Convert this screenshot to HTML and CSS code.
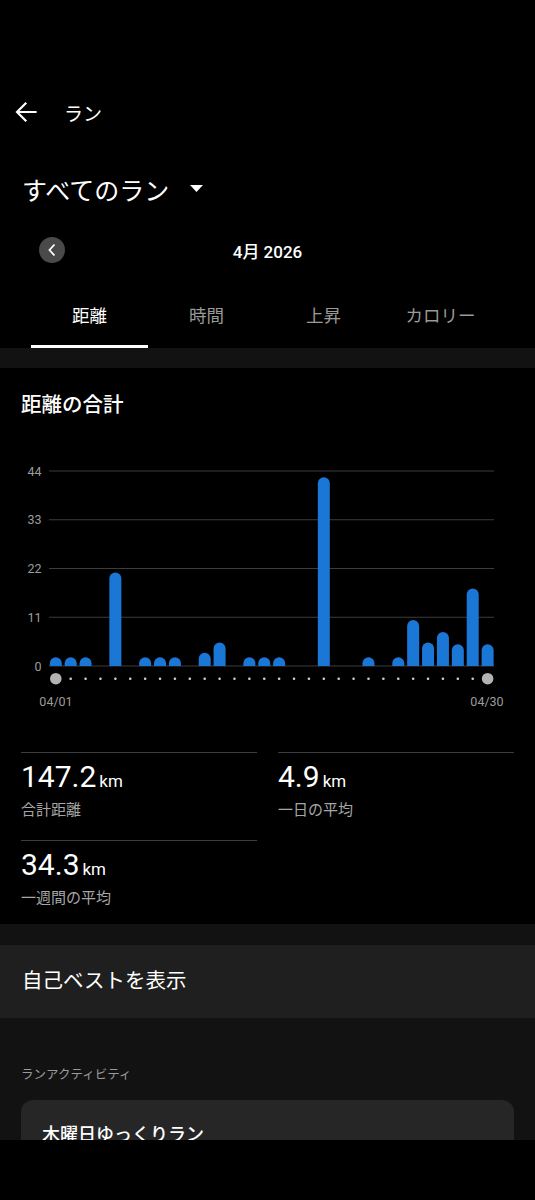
FILE: index.html
```html
<!DOCTYPE html>
<html lang="ja">
<head>
    <meta charset="UTF-8">
    <meta name="viewport" content="width=device-width, initial-scale=1.0">
    <title>ラン</title>
    <link rel="stylesheet" href="styles.css">
</head>
<body>
<div class="page">
    <div class="content">
        <div class="status"></div>

        <div class="topbar">
            <svg class="back" width="22" height="22" viewBox="0 0 22 22">
                <path d="M20.5 11H2.5M10.5 2.5L2 11l8.5 8.5" fill="none" stroke="#fff" stroke-width="2.2" stroke-linecap="square"/>
            </svg>
            <span class="topbar-title">ラン</span>
        </div>

        <div class="filter">
            <span>すべてのラン</span>
            <svg width="13" height="7" viewBox="0 0 13 7"><path d="M0 0h13L6.5 7z" fill="#fff"/></svg>
        </div>

        <div class="month">
            <div class="month-prev">
                <svg width="10" height="14" viewBox="0 0 10 14"><path d="M7.5 1.5L2.5 7l5 5.5" fill="none" stroke="#fff" stroke-width="1.8"/></svg>
            </div>
            <div class="month-label">4月 2026</div>
        </div>

        <div class="tabs">
            <div class="tab active">距離</div>
            <div class="tab">時間</div>
            <div class="tab">上昇</div>
            <div class="tab">カロリー</div>
        </div>

        <div class="band"></div>

        <div class="summary">
            <div class="summary-title">距離の合計</div>
            <svg class="chart" id="chart" width="535" height="265" viewBox="0 0 535 265"></svg>

            <div class="stats">
                <div class="stat">
                    <div class="stat-value">147.2<span class="unit">km</span></div>
                    <div class="stat-label">合計距離</div>
                </div>
                <div class="stat">
                    <div class="stat-value">4.9<span class="unit">km</span></div>
                    <div class="stat-label">一日の平均</div>
                </div>
                <div class="stat">
                    <div class="stat-value">34.3<span class="unit">km</span></div>
                    <div class="stat-label">一週間の平均</div>
                </div>
            </div>
        </div>

        <div class="band band-lower"></div>

        <div class="best">自己ベストを表示</div>

        <div class="activities">
            <div class="section-label">ランアクティビティ</div>
            <div class="activity">
                <div class="activity-name">木曜日ゆっくりラン</div>
                <div class="activity-dist">5.1 km</div>
            </div>
        </div>
    </div>
    <div class="navbar"></div>
</div>

<script>
    // 1日ごとの距離 (km)
    const days = [2, 2, 2, 0, 21.1, 0, 2, 2, 2, 0,
                  3, 5.3, 0, 2, 2, 2, 0, 0, 42.6, 0,
                  0, 2, 0, 2, 10.4, 5.3, 7.7, 4.9, 17.5, 4.9];
    const chart = document.getElementById("chart");
    const baseY = 216, topY = 21, maxKm = 44;
    const gridLeft = 49, gridRight = 494;
    const firstX = 55.8, step = 14.89, barW = 12;
    let html = "";

    // グリッドと目盛り
    [44, 33, 22, 11, 0].forEach((v, i) => {
        const y = topY + (baseY - topY) * i / 4;
        html += `<line x1="${gridLeft}" y1="${y}" x2="${gridRight}" y2="${y}" class="grid"/>`;
        html += `<text x="41.5" y="${y + 4.5}" class="axis" text-anchor="end">${v}</text>`;
    });

    // バーと日付のドット
    const scale = (baseY - topY) / maxKm;
    days.forEach((km, i) => {
        const cx = firstX + i * step;
        if (km > 0) {
            const x0 = cx - barW / 2;
            const t = baseY - km * scale;
            html += `<path class="bar" d="M${x0} ${baseY} V${t + 6} A6 6 0 0 1 ${x0 + barW} ${t + 6} V${baseY} Z"/>`;
        }
        if (i === 0 || i === days.length - 1) {
            html += `<circle cx="${cx}" cy="228.7" r="5.8" class="knob"/>`;
        } else {
            html += `<circle cx="${cx}" cy="228.7" r="1.3" class="dot"/>`;
        }
    });

    html += `<text x="56" y="256" class="axis" text-anchor="middle">04/01</text>`;
    html += `<text x="487" y="256" class="axis" text-anchor="middle">04/30</text>`;
    chart.innerHTML = html;
</script>
</body>
</html>
```

FILE: styles.css
```css
body {
    margin: 0;
    background-color: #000;
    color: #fff;
    font-family: Roboto, "Noto Sans CJK JP", sans-serif;
}
.page {
    width: 535px;
    height: 1200px;
    display: flex;
    flex-direction: column;
}
.content {
    flex: 1;
    min-height: 0;
    overflow: hidden;
}
.navbar {
    height: 60px;
    flex-shrink: 0;
    background-color: #000;
}
.status {
    height: 84px;
}
.topbar {
    height: 56px;
    display: flex;
    align-items: center;
    padding-left: 15px;
}
.topbar-title {
    margin-left: 27px;
    font-size: 19px;
}
.filter {
    margin-top: 19px;
    height: 60px;
    display: flex;
    align-items: center;
    padding-left: 22px;
    font-size: 25px;
}
.filter svg {
    margin-left: 21px;
    margin-top: -2px;
}
.month {
    margin-top: 11px;
    height: 40px;
    position: relative;
    display: flex;
    align-items: center;
    justify-content: center;
}
.month-prev {
    position: absolute;
    left: 39px;
    top: 7px;
    width: 26px;
    height: 26px;
    border-radius: 50%;
    background-color: #4a4a4a;
    display: flex;
    align-items: center;
    justify-content: center;
}
.month-label {
    font-size: 17px;
    font-weight: 500;
}
.tabs {
    margin-top: 20px;
    padding: 0 36px 0 31px;
    display: grid;
    grid-template-columns: repeat(4, 1fr);
}
.tab {
    text-align: center;
    font-size: 17.5px;
    line-height: 52px;
    padding-bottom: 3px;
    border-bottom: 3px solid transparent;
    color: #9a9a9a;
}
.tab.active {
    color: #fff;
    border-bottom-color: #fff;
}
.band {
    height: 20px;
    background-color: #121212;
}
.band-lower {
    height: 21px;
}
.summary {
    background-color: #000;
    padding: 24px 0 15px;
}
.summary-title {
    padding-left: 21px;
    font-size: 20.5px;
    font-weight: 500;
    line-height: 26px;
}
.chart {
    display: block;
    margin-top: 32px;
}
.chart .grid {
    stroke: #3d3d3d;
    stroke-width: 1;
}
.chart .axis {
    fill: #9c9c9c;
    font-size: 12.5px;
    font-family: Roboto, sans-serif;
}
.chart .bar {
    fill: #1b77d6;
}
.chart .knob {
    fill: #b3b3b3;
}
.chart .dot {
    fill: #d0d0d0;
}
.stats {
    margin-top: 37px;
    padding: 0 21px;
    display: grid;
    grid-template-columns: 1fr 1fr;
    column-gap: 21px;
    row-gap: 19px;
}
.stat {
    border-top: 1px solid #3d3d3d;
    padding-top: 6px;
}
.stat-value {
    font-size: 30px;
    line-height: 36px;
}
.unit {
    font-size: 17px;
    margin-left: 3px;
}
.stat-label {
    font-size: 15px;
    line-height: 22px;
    color: #a6a6a6;
}
.best {
    height: 73px;
    line-height: 73px;
    padding-left: 22px;
    font-size: 20.5px;
    background-color: #1f1f1f;
}
.activities {
    background-color: #121212;
    padding-top: 47px;
    height: 400px;
}
.section-label {
    padding-left: 21px;
    font-size: 12.5px;
    line-height: 20px;
    color: #9a9a9a;
}
.activity {
    margin: 15px 21px 0;
    padding: 22px 21px;
    background-color: #262626;
    border-radius: 12px;
    display: flex;
    justify-content: space-between;
}
.activity-name {
    font-size: 18px;
    font-weight: 500;
    line-height: 26px;
}
.activity-dist {
    padding-top: 16px;
    font-size: 16px;
    color: #ccc;
}
```
